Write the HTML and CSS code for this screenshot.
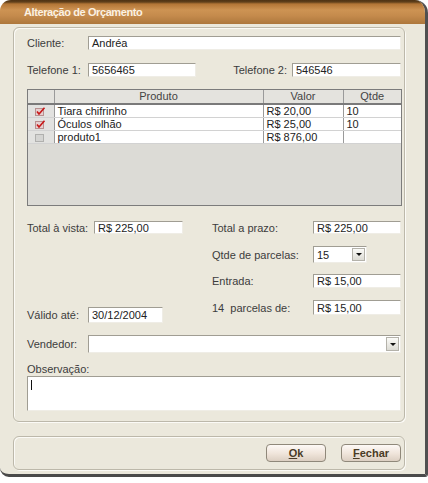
FILE: index.html
```html
<!DOCTYPE html>
<html lang="pt">
<head>
<meta charset="utf-8">
<title>Alteração de Orçamento</title>
<link rel="stylesheet" href="styles.css">
</head>
<body>
<div class="window">
  <div class="titlebar">Alteração de Orçamento</div>
  <div class="content">
    <div class="panel main">
      <div class="row">
        <span class="lbl w61">Cliente:</span>
        <div class="input grow h14">Andréa</div>
      </div>
      <div class="row r2 between">
        <div class="row">
          <span class="lbl w61">Telefone 1:</span>
          <div class="input h14 w108">5656465</div>
        </div>
        <div class="row">
          <span class="lbl mr5">Telefone 2:</span>
          <div class="input h14 w109">546546</div>
        </div>
      </div>
      <div class="grid">
        <table>
          <colgroup><col class="c-chk"><col class="c-prod"><col class="c-val"><col class="c-qtd"></colgroup>
          <thead><tr><th></th><th>Produto</th><th>Valor</th><th>Qtde</th></tr></thead>
          <tbody>
            <tr><td class="chk"><svg width="11" height="9" viewBox="0 0 11 9"><rect x="0.5" y="1.5" width="8" height="7" fill="#e6cfcf" stroke="#b89090"/><path d="M2 4.5 L4 7 L9.5 0.8" fill="none" stroke="#c81818" stroke-width="1.6"/></svg></td><td>Tiara chifrinho</td><td>R$ 20,00</td><td>10</td></tr>
            <tr><td class="chk"><svg width="11" height="9" viewBox="0 0 11 9"><rect x="0.5" y="1.5" width="8" height="7" fill="#e6cfcf" stroke="#b89090"/><path d="M2 4.5 L4 7 L9.5 0.8" fill="none" stroke="#c81818" stroke-width="1.6"/></svg></td><td>Óculos olhão</td><td>R$ 25,00</td><td>10</td></tr>
            <tr><td class="chk"><svg width="11" height="9" viewBox="0 0 11 9"><rect x="0.5" y="1.5" width="8" height="7" fill="#d4d4d2" stroke="#b0b0ae"/></svg></td><td>produto1</td><td>R$ 876,00</td><td></td></tr>
          </tbody>
        </table>
      </div>
      <div class="totals">
        <div class="col left">
          <div class="row">
            <span class="lbl w67">Total à vista:</span>
            <div class="input h13 w89">R$ 225,00</div>
          </div>
          <div class="row valido">
            <span class="lbl w61">Válido até:</span>
            <div class="input h16 w75">30/12/2004</div>
          </div>
        </div>
        <div class="col right">
          <div class="row">
            <span class="lbl w101">Total a prazo:</span>
            <div class="input h13 w88">R$ 225,00</div>
          </div>
          <div class="row g12">
            <span class="lbl w101">Qtde de parcelas:</span>
            <div class="input select h17 w54"><span class="val">15</span><span class="drop"><i></i></span></div>
          </div>
          <div class="row g11">
            <span class="lbl w101">Entrada:</span>
            <div class="input h14 w88">R$ 15,00</div>
          </div>
          <div class="row g12">
            <span class="lbl w101">14&nbsp;&nbsp;parcelas de:</span>
            <div class="input h15 w88">R$ 15,00</div>
          </div>
        </div>
      </div>
      <div class="row vend">
        <span class="lbl w61">Vendedor:</span>
        <div class="input select grow h18"><span class="val"></span><span class="drop"><i></i></span></div>
      </div>
      <div class="obs-lbl lbl">Observação:</div>
      <div class="input textarea"><span class="caret"></span></div>
    </div>
    <div class="panel footer">
      <button class="btn"><u>O</u>k</button>
      <button class="btn"><u>F</u>echar</button>
    </div>
  </div>
</div>
</body>
</html>
```
FILE: styles.css
```css
html, body { margin: 0; padding: 0; background: #ffffff; }
body {
  font-family: "Liberation Sans", Arial, sans-serif;
  font-size: 11px;
  color: #3a3a3a;
}
.window {
  width: 428px;
  height: 477px;
  box-sizing: border-box;
  background: #ebe8dc;
  border-right: 3px solid #505050;
  border-bottom: 3px solid #4a4a4a;
  border-radius: 11px 13px 3px 9px;
  overflow: hidden;
  display: flex;
  flex-direction: column;
}
.titlebar {
  height: 24px;
  line-height: 25px;
  padding-left: 24px;
  color: #fbf1e2;
  font-size: 11px;
  font-weight: bold;
  letter-spacing: -0.4px;
  background: linear-gradient(#4e3214 0, #5f3f1b 2px, #b27536 4px, #cd9353 10px, #c48a4c 16px, #ad773c 24px);
}
.content {
  padding: 3px 0 0 13px;
  display: flex;
  flex-direction: column;
}
.panel {
  width: 392px;
  box-sizing: border-box;
  border: 1px solid #bcb8aa;
  border-radius: 6px;
  box-shadow: inset 1px 1px 0 #fbfaf6, 1px 1px 0 #fbfaf6;
}
.main {
  height: 395px;
  padding: 8px 3px 10px 13px;
  display: flex;
  flex-direction: column;
}
.row { display: flex; align-items: center; }
.between { justify-content: space-between; }
.r2 { margin-top: 13px; }
.lbl { white-space: nowrap; color: #3c3c3c; }
.w61 { width: 61px; flex: none; }
.w67 { width: 67px; flex: none; }
.w101 { width: 101px; flex: none; }
.mr5 { margin-right: 5px; }
.input {
  box-sizing: border-box;
  background: #ffffff;
  border: 1px solid;
  border-color: #a09d93 #efede6 #efede6 #a09d93;
  padding-left: 3px;
  color: #222;
  display: flex;
  align-items: center;
  white-space: nowrap;
}
.grow { flex: 1; }
.h13 { height: 13px; }
.h14 { height: 14px; }
.h15 { height: 15px; }
.h16 { height: 16px; }
.h17 { height: 17px; }
.h18 { height: 18px; }
.w108 { width: 108px; }
.w109 { width: 109px; }
.w89 { width: 89px; }
.w88 { width: 88px; }
.w75 { width: 75px; }
.w54 { width: 54px; }

.grid {
  margin-top: 12px;
  width: 375px;
  height: 117px;
  box-sizing: border-box;
  border: 1px solid #7c7c7c;
  background: #dcdbd6;
  overflow: hidden;
}
.grid table {
  width: 100%;
  border-collapse: collapse;
  table-layout: fixed;
}
.c-chk { width: 26px; }
.c-prod { width: 209px; }
.c-val { width: 80px; }
.grid th {
  height: 13px;
  padding: 0;
  font-weight: normal;
  color: #444;
  background: #e4e3de;
  border-right: 1px solid #9a9a9a;
  border-bottom: 2px solid #7a7a7a;
  line-height: 13px;
}
.grid th:last-child, .grid td:last-child { border-right: none; }
.grid td {
  height: 12px;
  padding: 0 3px;
  line-height: 12px;
  background: #ffffff;
  color: #222;
  border-right: 1px solid #9a9a9a;
  border-bottom: 1px solid #d2d2d2;
  white-space: nowrap;
  overflow: hidden;
}
.grid td.chk {
  background: #e2e2e0;
  text-align: center;
  padding: 0;
}
.grid td.chk svg { display: block; margin: 1px auto 0; }

.totals {
  margin-top: 15px;
  display: flex;
  justify-content: space-between;
  width: 374px;
}
.col { display: flex; flex-direction: column; }
.left { width: 156px; }
.right { width: 189px; }
.valido { margin-top: 73px; }
.g12 { margin-top: 12px; }
.g11 { margin-top: 11px; }

.select { padding-right: 1px; justify-content: space-between; }
.select .drop {
  width: 13px;
  height: calc(100% - 2px);
  box-sizing: border-box;
  border: 1px solid #b4b2aa;
  background: linear-gradient(#fbfbf8, #dcdbd4);
  display: flex;
  align-items: center;
  justify-content: center;
}
.select .drop i {
  width: 0; height: 0;
  border-left: 3px solid transparent;
  border-right: 3px solid transparent;
  border-top: 3px solid #111;
}
.vend { margin-top: 12px; }
.obs-lbl { margin-top: 10px; height: 13px; line-height: 13px; }
.textarea {
  height: 35px;
  width: 374px;
  align-items: flex-start;
  padding-top: 3px;
}
.caret { width: 1px; height: 10px; background: #111; }

.footer {
  margin-top: 14px;
  height: 34px;
  padding: 7px 3px 0 0;
  display: flex;
  justify-content: flex-end;
  gap: 15px;
}
.btn {
  width: 60px;
  height: 18px;
  box-sizing: border-box;
  border: 1px solid #8f887a;
  border-radius: 4px;
  background: linear-gradient(#fdf9f6, #efe4da 55%, #dccfc2);
  font-family: "Liberation Sans", Arial, sans-serif;
  font-size: 11px;
  font-weight: bold;
  color: #4a3c26;
  padding: 0;
  line-height: 15px;
}
```
